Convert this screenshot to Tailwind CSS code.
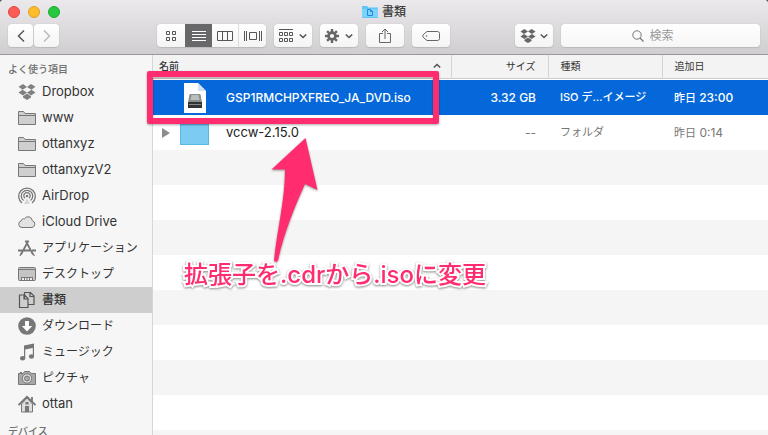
<!DOCTYPE html>
<html lang="ja">
<head>
<meta charset="utf-8">
<meta name="viewport" content="width=device-width, initial-scale=1">
<title>書類</title>
<script src="https://cdn.jsdelivr.net/npm/@tailwindcss/browser@4"></script>
</head>
<body class="bg-[#555] font-[Inter,'Noto_Sans_CJK_JP',sans-serif] text-[13px] text-[#333]">
<svg class="hidden">
  <symbol id="dropbox" viewBox="0 0 18 18"><path fill="currentColor" d="M5 1 9 4 4.500 6.800.5 3.800ZM13 1l4.500 2.800-4 3L9 4ZM.5 9.500l4-2.700L9 9.600l-4 2.800ZM13.500 6.800l4 2.700L13 12.400 9 9.600ZM9 10.600l4 2.700v1.200L9 17l-4-2.500v-1.200Z"/></symbol>
  <symbol id="folder" viewBox="0 0 18 18"><path fill="#cfcfcf" stroke="#777" d="M.5 15.500v-13h5l1.500 2h10.500v11Z"/><path stroke="#777" fill="none" d="M.5 6.500h17"/></symbol>
  <symbol id="chev" viewBox="0 0 8 8"><path fill="none" stroke="#555" stroke-width="1.600" d="m.8 2.500 3.200 3 3.200-3"/></symbol>
</svg>
<div class="relative flex h-screen flex-col overflow-hidden rounded-t bg-white">
  <header class="flex shrink-0 flex-col border-b border-[#999] bg-linear-to-b from-[#ebe9eb] to-[#d0ced0]">
    <div class="relative flex h-6 items-center justify-center">
      <div class="absolute left-2 flex gap-2">
        <button aria-label="閉じる" class="size-3 rounded-full border border-[#e2463f] bg-[#fc5b57]"></button>
        <button aria-label="しまう" class="size-3 rounded-full border border-[#dfa023] bg-[#fdbc2e]"></button>
        <button aria-label="拡大" class="size-3 rounded-full border border-[#1aab29] bg-[#27c840]"></button>
      </div>
      <h1 class="flex items-center gap-1 text-[12px] leading-4 font-medium text-[#3d3d3d]">
        <svg class="h-4 w-4" viewBox="0 0 16 16"><path fill="#5fc5f5" d="M0 14V2h5l1.500 1.500H16V14Z"/><path fill="#7fd2fa" d="M0 5h16v8H0Z"/><path fill="none" stroke="#1f8be0" d="M5.500 5.500h3l2 2v4h-5ZM8.500 5.500v2h2"/></svg>
        書類
      </h1>
    </div>
    <div class="flex h-[30px] items-start px-2">
      <div class="flex gap-px">
        <button aria-label="戻る" class="flex h-[23px] w-[25px] items-center justify-center rounded bg-linear-to-b from-white to-[#f4f4f4] shadow-[0_0_1px_#aaa,0_1px_1px_#bbb]"><svg class="h-3.5 w-2" viewBox="0 0 8 14"><path fill="none" stroke="#555" stroke-width="1.500" d="M7 1.500 1.500 7 7 12.500"/></svg></button>
        <button aria-label="進む" class="flex h-[23px] w-[25px] items-center justify-center rounded bg-linear-to-b from-white to-[#f4f4f4] shadow-[0_0_1px_#aaa,0_1px_1px_#bbb]"><svg class="h-3.5 w-2" viewBox="0 0 8 14"><path fill="none" stroke="#bbb" stroke-width="1.500" d="M1 1.500 6.500 7 1 12.500"/></svg></button>
      </div>
      <div class="ml-[98px] flex h-[23px] overflow-hidden rounded bg-linear-to-b from-white to-[#f4f4f4] shadow-[0_0_1px_#aaa,0_1px_1px_#bbb]">
        <button aria-label="アイコン" class="flex w-7 items-center justify-center"><svg class="h-2.5 w-2.5" viewBox="0 0 10 10"><path fill="none" stroke="#555" d="M.5.5h3v3h-3ZM6.500.5h3v3h-3ZM.5 6.500h3v3h-3ZM6.500 6.500h3v3h-3Z"/></svg></button>
        <button aria-label="リスト" class="flex w-[27px] items-center justify-center bg-[#68676a]"><svg class="h-2.5 w-3.5" viewBox="0 0 14 10"><path stroke="#fff" d="M0 .5h14M0 3.500h14M0 6.500h14M0 9.500h14"/></svg></button>
        <button aria-label="カラム" class="flex w-[27px] items-center justify-center border-r border-[#ddd]"><svg class="h-2.5 w-4" viewBox="0 0 16 10"><path fill="none" stroke="#555" d="M.5.5h15v9H.5ZM5.500.5v9M10.500.5v9"/></svg></button>
        <button aria-label="カバーフロー" class="flex w-[27px] items-center justify-center"><svg class="h-2.5 w-[18px]" viewBox="0 0 18 10"><path fill="none" stroke="#555" d="M.5 0v10M2.500 0v10M5.500 1.500h7v7h-7ZM15.500 0v10M17.500 0v10"/></svg></button>
      </div>
      <div class="ml-2 flex gap-2">
        <button aria-label="グループ" class="flex h-[23px] w-[38px] items-center justify-center gap-1.5 rounded bg-linear-to-b from-white to-[#f4f4f4] shadow-[0_0_1px_#aaa,0_1px_1px_#bbb]"><svg class="h-[14px] w-[14px]" viewBox="0 0 14 14"><path fill="none" stroke="#555" d="M0 .5h14M.5 3.500h3v3h-3ZM5.500 3.500h3v3h-3ZM10.500 3.500h3v3h-3ZM.5 9.500h3v3h-3ZM5.500 9.500h3v3h-3ZM10.500 9.500h3v3h-3Z"/></svg><svg class="size-2"><use href="#chev"/></svg></button>
        <button aria-label="操作" class="flex h-[23px] w-[38px] items-center justify-center gap-1.5 rounded bg-linear-to-b from-white to-[#f4f4f4] shadow-[0_0_1px_#aaa,0_1px_1px_#bbb]"><svg class="size-3.5" viewBox="0 0 14 14"><g stroke="#666" stroke-width="2.400"><path d="M7 0v3M7 11v3M0 7h3M11 7h3M2.050 2.050l2.100 2.100M9.850 9.850l2.100 2.100M2.050 11.950l2.100-2.100M9.850 4.150l2.100-2.100"/></g><circle cx="7" cy="7" r="3.400" fill="none" stroke="#666" stroke-width="2.600"/></svg><svg class="size-2"><use href="#chev"/></svg></button>
        <button aria-label="共有" class="flex h-[23px] w-[38px] items-center justify-center rounded bg-linear-to-b from-white to-[#f4f4f4] shadow-[0_0_1px_#aaa,0_1px_1px_#bbb]"><svg class="h-4 w-3" viewBox="0 0 12 16"><path fill="none" stroke="#666" d="M4 5.500H.5v9h11v-9H8M6 11V1.500M3 4l3-3 3 3"/></svg></button>
        <button aria-label="タグ" class="flex h-[23px] w-[38px] items-center justify-center rounded bg-linear-to-b from-white to-[#f4f4f4] shadow-[0_0_1px_#aaa,0_1px_1px_#bbb]"><svg class="h-2.5 w-[18px]" viewBox="0 0 18 10"><path fill="none" stroke="#666" d="M5 .5h10.500q2 0 2 2v5q0 2-2 2H5L1.200 6.300Q.3 5 1.200 3.700Z"/><circle cx="4.500" cy="5" r=".8" fill="#666"/></svg></button>
      </div>
      <button aria-label="Dropbox" class="ml-auto flex h-[23px] w-[38px] items-center justify-center gap-1 rounded bg-linear-to-b from-white to-[#f4f4f4] text-[#666] shadow-[0_0_1px_#aaa,0_1px_1px_#bbb]"><svg class="size-4"><use href="#dropbox"/></svg><svg class="size-2"><use href="#chev"/></svg></button>
      <label class="ml-2 flex h-[23px] w-[199px] items-center justify-center gap-1.5 rounded bg-linear-to-b from-white to-[#f6f6f6] shadow-[0_0_1px_#aaa,0_1px_1px_#bbb]">
        <svg class="size-3" viewBox="0 0 12 12"><circle cx="5" cy="5" r="4.200" fill="none" stroke="#777"/><path stroke="#777" stroke-width="1.200" d="m8 8 3.500 3.500"/></svg>
        <input type="text" aria-label="検索" placeholder="検索" class="w-10 text-[12px] outline-none placeholder:text-[#999]">
      </label>
    </div>
  </header>
  <div class="flex min-h-0 flex-1">
    <aside class="w-[153px] shrink-0 overflow-hidden border-r border-[#d6d6d6] bg-[#f6f6f6]">
      <h2 class="flex h-6 items-center pt-1 pl-2 text-[10px] font-medium text-[#707070]">よく使う項目</h2>
      <nav>
        <a href="#" class="flex h-[26px] items-center gap-1.5 pl-[18px]"><svg class="size-[18px] text-[#808080]"><use href="#dropbox"/></svg>Dropbox</a>
        <a href="#" class="flex h-[26px] items-center gap-1.5 pl-[18px]"><svg class="size-[18px]"><use href="#folder"/></svg>www</a>
        <a href="#" class="flex h-[26px] items-center gap-1.5 pl-[18px]"><svg class="size-[18px]"><use href="#folder"/></svg>ottanxyz</a>
        <a href="#" class="flex h-[26px] items-center gap-1.5 pl-[18px]"><svg class="size-[18px]"><use href="#folder"/></svg>ottanxyzV2</a>
        <a href="#" class="flex h-[26px] items-center gap-1.5 pl-[18px]"><svg class="size-[18px]" viewBox="0 0 18 18"><g fill="none" stroke="#777" stroke-width="1.300"><path d="M4 16a8.300 8.300 0 1 1 10 0M5.500 13.500a5.700 5.700 0 1 1 7 0M7 11.300a3.200 3.200 0 1 1 4 0"/></g><circle cx="9" cy="9" r="1.300" fill="#777"/><path fill="#777" d="m9 11 3 6H6Z" opacity=".25"/></svg>AirDrop</a>
        <a href="#" class="flex h-[26px] items-center gap-1.5 pl-[18px]"><svg class="size-[18px]" viewBox="0 0 18 18"><path fill="#e2e2e2" stroke="#777" d="M4 14.500a3.300 3.300 0 0 1-.8-6.500 2.500 2.500 0 0 1 3.300-2.200 4.200 4.200 0 0 1 7.800 1.900 3.500 3.500 0 0 1-.3 6.800Z"/></svg>iCloud Drive</a>
        <a href="#" class="flex h-[26px] items-center gap-1.5 pl-[18px] text-[12px]"><svg class="size-[18px]" viewBox="0 0 18 18"><g fill="none" stroke="#777" stroke-width="1.800"><path d="M10.500 1.500 3 15.500M7.500 1.500l7.500 14M0 11.500h4.500M6 11.500h6M14 11.500h4"/><path stroke-width="1.200" d="m3.300 14-1.300 3M14.500 14l2 3"/></g></svg>アプリケーション</a>
        <a href="#" class="flex h-[26px] items-center gap-1.5 pl-[18px] text-[12px]"><svg class="size-[18px]" viewBox="0 0 18 18"><rect x=".5" y="2.500" width="17" height="13" rx="1" fill="#c4c4c4" stroke="#777"/><path stroke="#777" d="M1 4.500h16"/><path fill="#777" d="M3 12h12v3H3Z"/><path fill="#eee" d="M4 13h2v2H4ZM7 13h1.500v2H7ZM9.500 13H11v2H9.500ZM12 13h2v2h-2Z"/></svg>デスクトップ</a>
        <a href="#" aria-current="page" class="flex h-[26px] items-center gap-1.5 bg-[#cecece] pl-[18px] text-[12px] font-medium"><svg class="size-[18px]" viewBox="0 0 18 18"><g fill="#cecece" stroke="#555" stroke-width="1.200"><path d="M6.500 1.500h6l3.500 3.500v8.500H6.500ZM12 1.500V5.500h4"/><path d="M1.500 4h5L10 7.500v9H1.500ZM6 4v4h4"/></g></svg>書類</a>
        <a href="#" class="flex h-[26px] items-center gap-1.5 pl-[18px] text-[12px]"><svg class="size-[18px]" viewBox="0 0 18 18"><circle cx="9" cy="9" r="8.800" fill="#777"/><path fill="#fff" d="M7 4h4v5h3.200L9 14.500 3.800 9H7Z"/></svg>ダウンロード</a>
        <a href="#" class="flex h-[26px] items-center gap-1.5 pl-[18px] text-[12px]"><svg class="size-[18px]" viewBox="0 0 18 18"><path fill="#777" d="M6 2.500 16 .5V13h-1.200V5L7.200 6.500V15H6Z"/><ellipse cx="4.600" cy="15.300" rx="2.600" ry="2.200" fill="#777"/><ellipse cx="13.500" cy="13.500" rx="2.600" ry="2.200" fill="#777"/></svg>ミュージック</a>
        <a href="#" class="flex h-[26px] items-center gap-1.5 pl-[18px] text-[12px]"><svg class="size-[18px]" viewBox="0 0 18 18"><path fill="#a8a8a8" stroke="#777" d="M.5 15.500V4.500H5l1.500-2h5l1.500 2h4.500v11Z"/><path stroke="#777" d="M2 3.500h2"/><circle cx="9" cy="9.500" r="4.700" fill="#ddd" stroke="#777"/><circle cx="9" cy="9.500" r="2.500" fill="#aaa" stroke="#777"/></svg>ピクチャ</a>
        <a href="#" class="flex h-[26px] items-center gap-1.5 pl-[18px]"><svg class="size-[18px]" viewBox="0 0 18 18"><path fill="#ddd" stroke="#777" d="M3.500 9v8h11V9L9 3Z"/><path fill="none" stroke="#777" stroke-width="1.800" d="M.6 10 9 1.800 17.400 10M14 2v4"/><path fill="#777" d="M7 11h4v6H7ZM7.500 7h3v2.500h-3Z"/></svg>ottan</a>
      </nav>
      <h2 class="flex h-6 items-center pt-1 pl-2 text-[10px] leading-3 font-medium text-[#707070]">デバイス</h2>
    </aside>
    <main class="relative min-w-0 flex-1 overflow-hidden">
      <table class="w-full table-fixed border-collapse text-left">
        <thead>
          <tr class="h-[23px] border-b border-[#ccc] bg-[#f3f3f3] text-[10px] text-[#333]">
            <th class="p-0 pl-1.5 font-medium"><button class="flex w-full items-center justify-between pr-2.5">名前<svg class="size-2 rotate-180"><use href="#chev"/></svg></button></th>
            <th class="w-[97px] border-x border-[#d4d4d4] p-0 pr-3 text-right font-normal">サイズ</th>
            <th class="w-[114px] border-r border-[#d4d4d4] p-0 pl-3 font-normal">種類</th>
            <th class="w-[106px] p-0 pl-3 font-normal">追加日</th>
          </tr>
          <tr class="h-0.5"><td colspan="4" class="p-0"></td></tr>
        </thead>
        <tbody class="text-[12px] text-[#777]">
          <tr class="h-[35px] bg-[#0568da] font-medium text-white">
            <td class="p-0"><div class="flex items-center pl-[31px]"><svg class="h-[30px] w-[22px]" viewBox="0 0 22 30"><path fill="#fff" d="M0 0h14l8 8v22H0Z"/><path fill="#cfe0f2" d="M14 0v8h8Z"/><path fill="#8a8f8c" d="M6.500 11h9q1 0 1.200 1L18 20H4l1.300-8q.2-1 1.200-1Z"/><path fill="#b9c0bb" d="M7.500 12h7l1 5h-9Z"/><path fill="#333" d="M4 19h14v6H4Z"/><path fill="#888" d="M5 21h12v1H5Z"/></svg><span class="ml-5">GSP1RMCHPXFREO_JA_DVD.iso</span></div></td>
            <td class="p-0 pr-3 text-right">3.32 GB</td>
            <td class="p-0 pl-3 text-[11px]">ISO デ…イメージ</td>
            <td class="p-0 pl-3"><span class="text-[11px]">昨日</span> 23:00</td>
          </tr>
          <tr class="h-[35px]">
            <td class="p-0"><div class="flex items-center pl-[9px] text-[#222]"><svg class="h-2.5 w-2" viewBox="0 0 8 10"><path fill="#8c8c8c" d="M0 0v10l8-5Z"/></svg><svg class="ml-2.5 h-[26px] w-[29px]" viewBox="0 0 29 26"><path fill="#58b8e8" d="M0 25V1h10l2 2h17v22Z"/><path fill="#7ccbf3" d="M1 5h27v19H1Z"/></svg><span class="ml-[17px] text-[13px]">vccw-2.15.0</span></div></td>
            <td class="p-0 pr-3 text-right">--</td>
            <td class="p-0 pl-3 text-[11px]">フォルダ</td>
            <td class="p-0 pl-3"><span class="text-[11px]">昨日</span> 0:14</td>
          </tr>
          <tr class="h-[35px] bg-[#f5f5f5]"><td colspan="4"></td></tr>
          <tr class="h-[35px]"><td colspan="4"></td></tr>
          <tr class="h-[35px] bg-[#f5f5f5]"><td colspan="4"></td></tr>
          <tr class="h-[35px]"><td colspan="4"></td></tr>
          <tr class="h-[35px] bg-[#f5f5f5]"><td colspan="4"></td></tr>
          <tr class="h-[35px]"><td colspan="4"></td></tr>
          <tr class="h-[35px] bg-[#f5f5f5]"><td colspan="4"></td></tr>
          <tr class="h-[35px]"><td colspan="4"></td></tr>
          <tr class="h-[35px] bg-[#f5f5f5]"><td colspan="4"></td></tr>
        </tbody>
      </table>
    </main>
  </div>
  <div class="pointer-events-none absolute top-[71px] left-[147px] h-[53px] w-[292px] rounded-xs border-6 border-[#ff2d6f] drop-shadow-[0_1px_1px_#0005]"></div>
  <svg class="pointer-events-none absolute top-[138px] left-[270px] h-[126px] w-[50px] drop-shadow-[0_1px_1px_#0006]" viewBox="0 0 50 126"><path fill="#ff2d6f" d="M35.500 0 47.500 52 35 46C26 66 14 94 8 122.500q-2 2.500-4 0C7 92 15 62 15 31.500L1.500 31.500Z"/></svg>
  <p class="pointer-events-none absolute top-[257px] left-[184px] text-[24px] leading-9 font-medium whitespace-nowrap text-[#ff2d6f] drop-shadow-[0_1px_1px_#0007] [-webkit-text-stroke:4px_white] [paint-order:stroke_fill]">拡張子を.cdrから.isoに変更</p>
</div>
</body>
</html>
